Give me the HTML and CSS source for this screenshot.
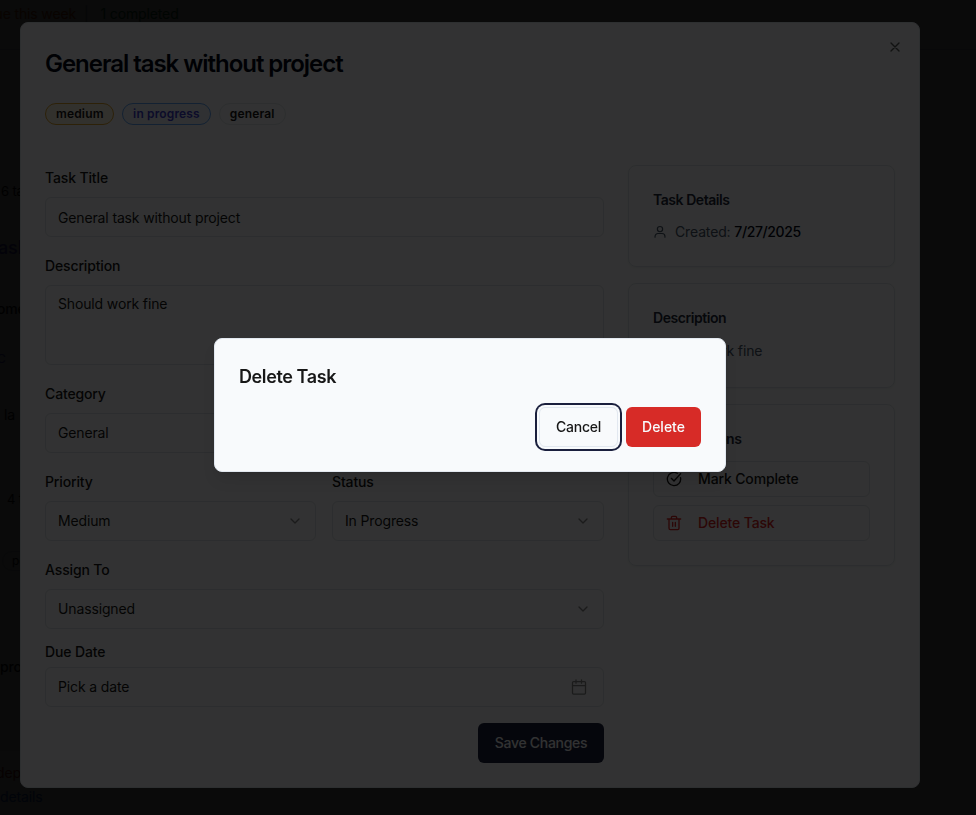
FILE: index.html
```html
<!DOCTYPE html>
<html lang="en">
<head>
<meta charset="utf-8">
<title>Tasks</title>
<link rel="stylesheet" href="styles.css">
</head>
<body>
<main class="page">
  <div class="rule rule-top"></div>
  <div class="rule rule-bottom"></div>
  <span class="bit week">ue this week</span>
  <span class="bit done"><i>|</i>1 completed</span>
  <span class="bit n6">6 ta</span>
  <span class="bit link">ask</span>
  <span class="bit some">ome</span>
  <span class="bit circ">C</span>
  <span class="bit la">la</span>
  <span class="bit n4">4 t</span>
  <span class="bit pill">pe</span>
  <span class="bit pro">pro</span>
  <span class="bit dep">dep</span>
  <span class="bit details">details</span>
</main>
<div class="overlay"></div>
<section class="dialog">
  <svg class="close" viewBox="0 0 24 24"><path d="M18 6 6 18M6 6l12 12"/></svg>
  <h1>General task without project</h1>
  <div class="badges">
    <span class="badge medium">medium</span>
    <span class="badge progress">in progress</span>
    <span class="badge">general</span>
  </div>
  <div class="columns">
    <form class="form">
      <div class="field"><label>Task Title</label><div class="control text">General task without project</div></div>
      <div class="field"><label>Description</label><div class="control area">Should work fine</div></div>
      <div class="field"><label>Category</label><div class="control">General</div></div>
      <div class="pair">
        <div class="field"><label>Priority</label><div class="control">Medium<svg class="chevron" viewBox="0 0 24 24"><path d="m6 9 6 6 6-6"/></svg></div></div>
        <div class="field"><label>Status</label><div class="control">In Progress<svg class="chevron" viewBox="0 0 24 24"><path d="m6 9 6 6 6-6"/></svg></div></div>
      </div>
      <div class="field"><label>Assign To</label><div class="control">Unassigned<svg class="chevron" viewBox="0 0 24 24"><path d="m6 9 6 6 6-6"/></svg></div></div>
      <div class="field date"><label>Due Date</label><div class="control">Pick a date<svg class="calendar" viewBox="0 0 16 16"><rect x="1.5" y="2.5" width="13" height="12.5" rx="1"/><path d="M1.5 6.5h13M5 .8v3.4M10.5 .8v3.4"/></svg></div></div>
      <button class="save" type="button">Save Changes</button>
    </form>
    <aside class="side">
      <div class="card">
        <h2>Task Details</h2>
        <p class="created"><svg viewBox="0 0 24 24"><circle cx="12" cy="7" r="4.5"/><path d="M3.500 21v-1.500a5 5 0 0 1 5-5h7a5 5 0 0 1 5 5v1.500"/></svg>Created: <b>7/27/2025</b></p>
      </div>
      <div class="card desc">
        <h2>Description</h2>
        <p>Should work fine</p>
      </div>
      <div class="card actions">
        <h2>Quick Actions</h2>
        <div class="action"><svg viewBox="0 0 24 24"><path d="M21.800 10A10 10 0 1 1 17 3.340"/><path d="m8 11 4 4L22 4"/></svg>Mark Complete</div>
        <div class="action danger"><svg viewBox="0 0 24 24"><path d="M2 6h20M19.500 6v14a2 2 0 0 1-2 2h-11a2 2 0 0 1-2-2V6M8 6V4a2 2 0 0 1 2-2h4a2 2 0 0 1 2 2v2M10 11v6M14 11v6"/></svg>Delete Task</div>
      </div>
    </aside>
  </div>
</section>
<div class="overlay"></div>
<section class="alert">
  <h3>Delete Task</h3>
  <div class="buttons">
    <button class="cancel" type="button">Cancel</button>
    <button class="delete" type="button">Delete</button>
  </div>
</section>
</body>
</html>
```
FILE: styles.css
```css
* { box-sizing: border-box; }
body {
  margin: 0;
  height: 815px;
  overflow: hidden;
  background: #f8fafc;
  color: #171717;
  font: 400 14px/20px Inter, "Liberation Sans", sans-serif;
  letter-spacing: -.14px;
}
h1, h2, h3, p { margin: 0; }
svg { fill: none; stroke: currentColor; stroke-width: 2; stroke-linecap: round; stroke-linejoin: round; }
button { font: inherit; letter-spacing: inherit; border: 0; padding: 0; }

.page { position: absolute; inset: 0; overflow: hidden; }
.bit { position: absolute; white-space: nowrap; }
.bit i { font-style: normal; margin-right: 12px; color: #94a3b8; }
.week { right: 900px; top: 4px; color: #ea580c; }
.done { left: 84px; top: 4px; color: #15803d; }
.n6 { left: 1px; top: 181px; font-size: 13px; }
.link { left: -2px; top: 238px; font-size: 18px; font-weight: 500; color: #4f46e5; }
.some { left: -3px; top: 299px; font-weight: 500; }
.circ { left: -3px; top: 349px; font-size: 12px; color: #4f46e5; }
.la { left: 4px; top: 405px; }
.n4 { left: 7px; top: 489px; font-size: 13px; }
.pill { left: 2px; top: 551px; padding: 0 9px; border: 1px solid #cbd5e1; border-radius: 10px; font-size: 12px; line-height: 18px; }
.pro { left: 0; top: 657px; font-weight: 500; }
.dep { left: -4px; top: 763px; color: #b91c1c; }
.details { left: 0; top: 787px; color: #2563eb; }
.rule { position: absolute; left: 0; right: 0; }
.rule-top { top: 49px; border-top: 1px solid #cbd5e1; }
.rule-bottom { top: 740px; right: 900px; height: 11px; background: #dfe3e8; }

.overlay { position: fixed; inset: 0; background: rgba(0, 0, 0, .8); }

.dialog {
  position: absolute;
  left: 20px;
  top: 22px;
  width: 900px;
  height: 766px;
  padding: 24px;
  border: 1px solid #e2e8f0;
  border-radius: 8px;
  background: #f8fafc;
}
.close { position: absolute; right: 16px; top: 16px; width: 16px; height: 16px; opacity: .7; }
h1 { height: 32px; font-size: 24px; line-height: 34px; font-weight: 600; letter-spacing: -1.04px; color: #020817; }
.badges { display: flex; gap: 8px; margin-top: 24px; }
.badge { height: 22px; padding: 0 10px; border: 1px solid #dfe4ea; border-radius: 11px; font-size: 12px; line-height: 20px; font-weight: 600; letter-spacing: .15px; }
.medium { padding: 0 9.5px 0 10px; background: #fbf3e2; border-color: #dfa52c; }
.progress { background: #eff6ff; border-color: #60a5fa; color: #3f3fd0; }

.columns { display: flex; gap: 24px; margin-top: 40px; }
.form { width: 559px; display: flex; flex-direction: column; gap: 16px; }
.field { min-width: 0; }
.field label { display: block; height: 32px; line-height: 26px; font-weight: 500; }
.control {
  display: flex;
  align-items: center;
  height: 40px;
  padding: 0 12px;
  border: 1px solid #dce1e8;
  border-radius: 6px;
}
.text { padding-top: 2px; }
.area { height: 80px; padding-top: 8px; align-items: flex-start; }
.pair { display: grid; grid-template-columns: 271px 272px; gap: 16px; }
.chevron { width: 16px; height: 16px; margin-left: auto; opacity: .5; }
.date { margin-top: -2px; }
.date label { height: 24px; line-height: 18px; }
.calendar { width: 16px; height: 16px; margin: 0 4px 0 auto; opacity: .5; stroke-width: 1.25; }
.save { align-self: flex-end; width: 126px; height: 40px; border-radius: 6px; background: #1a1f3d; color: #f8fafc; font-weight: 500; letter-spacing: -.3px; }

.side { flex: 1; display: flex; flex-direction: column; gap: 16px; }
.card { height: 102px; padding: 24px; border: 1px solid #dce1e8; border-radius: 8px; color: #475569; box-shadow: 0 1px 2px rgba(0, 0, 0, .05); }
.card h2 { font-size: 14px; line-height: 20px; font-weight: 600; letter-spacing: -.45px; color: #1e293b; }
.created { display: flex; align-items: center; margin-top: 12px; white-space: pre; }
.created svg { width: 14px; height: 14px; margin-right: 8px; }
.created b { font-weight: 500; letter-spacing: -.4px; color: #020617; }
.desc { height: 105px; }
.desc p { margin-top: 13px; }
.actions { height: 162px; }
.card.actions h2 { margin-bottom: 12px; }
.action { display: flex; align-items: center; height: 36px; margin-bottom: 8px; padding: 0 12px; border: 1px solid #dce1e8; border-radius: 6px; font-weight: 500; color: #171717; }
.action svg { width: 16px; height: 16px; margin-right: 16px; }
.danger { color: #dc2626; }

.alert {
  position: absolute;
  left: 214px;
  top: 338px;
  width: 512px;
  height: 134px;
  padding: 24px;
  border: 1px solid #e2e8f0;
  border-radius: 8px;
  background: #f8fafc;
  box-shadow: 0 10px 15px -3px rgba(0, 0, 0, .1), 0 4px 6px -4px rgba(0, 0, 0, .1);
}
.alert h3 { font-size: 18px; line-height: 28px; font-weight: 600; letter-spacing: -.4px; }
.buttons { display: flex; justify-content: flex-end; gap: 8px; margin-top: 16px; }
.buttons button { height: 40px; border-radius: 6px; font-weight: 500; }
.cancel { width: 79px; border: 1px solid #e2e8f0; background: #f8fafc; color: #171717; letter-spacing: -.25px; box-shadow: 0 0 0 2px #f8fafc, 0 0 0 4px #1a1f3d; }
.buttons .delete { width: 75px; background: #d72b27; color: #f8fafc; letter-spacing: 0; }
```
